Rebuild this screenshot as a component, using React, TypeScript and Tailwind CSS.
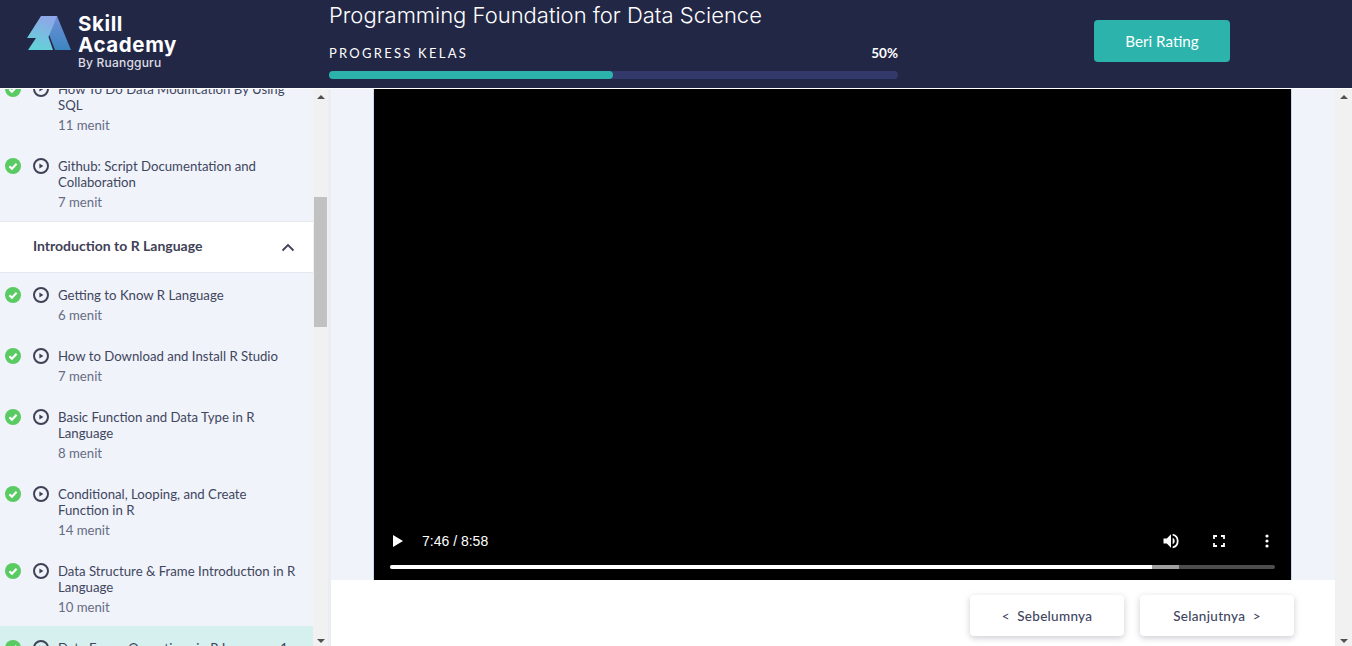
import React from 'react';

const bodyFont = "font-['Lato','Noto_Sans',sans-serif]";

interface Lesson {
  title: string;
  duration: string;
  last?: boolean;
  active?: boolean;
}

const firstLessons: Lesson[] = [
  { title: 'How To Do Data Modification By Using SQL', duration: '11 menit' },
  { title: 'Github: Script Documentation and Collaboration', duration: '7 menit', last: true }
];

const rLessons: Lesson[] = [
  { title: 'Getting to Know R Language', duration: '6 menit' },
  { title: 'How to Download and Install R Studio', duration: '7 menit' },
  { title: 'Basic Function and Data Type in R Language', duration: '8 menit' },
  { title: 'Conditional, Looping, and Create Function in R', duration: '14 menit' },
  { title: 'Data Structure & Frame Introduction in R Language', duration: '10 menit' },
  { title: 'Data Frame Operations in R Language 1', duration: '9 menit', active: true }
];

const CheckBadge = () => (
  <svg width="16" height="16" viewBox="0 0 16 16" className="shrink-0">
    <circle cx="8" cy="8" r="8" fill="#5acb62" />
    <path d="M4.4 8.300l2.500 2.400 4.700-4.900" fill="none" stroke="#fff" strokeWidth="2.200" />
  </svg>
);

const PlayCircle = () => (
  <svg width="16" height="16" viewBox="0 0 16 16" className="shrink-0">
    <circle cx="8" cy="8" r="7" fill="none" stroke="#3f4257" strokeWidth="2" />
    <path d="M6.400 5.400l4 2.600-4 2.600z" fill="#3f4257" />
  </svg>
);

const LessonRow = ({ lesson }: { lesson: Lesson }) => (
  <div className={`flex pl-[5px] ${lesson.active ? '-mt-px bg-[#d5f0ee] pt-[14px]' : 'pt-[13px]'} ${lesson.last ? 'pb-[11px]' : 'pb-[12px]'}`}>
    <CheckBadge />
    <div className="ml-[12px]">
      <PlayCircle />
    </div>
    <div className="ml-[9px] w-[240px]">
      <div className="text-[13.2px] leading-[16px] text-[#41465f]">{lesson.title}</div>
      <div className="mt-[4px] text-[13.2px] leading-[16px] text-[#666c84]">{lesson.duration}</div>
    </div>
  </div>
);

const Logo = () => (
  <div className="flex items-start pl-[27px] pt-[13px]">
    <svg width="45" height="36" viewBox="0 0 45 36" className="mt-[2px] shrink-0">
      <defs>
        <linearGradient id="bolt" x1="0.6" y1="0" x2="0.3" y2="1">
          <stop offset="0" stopColor="#8fa6e8" />
          <stop offset="1" stopColor="#62d3d8" />
        </linearGradient>
        <linearGradient id="leg" x1="0.5" y1="0" x2="0.5" y2="1">
          <stop offset="0" stopColor="#6f8fd8" />
          <stop offset="1" stopColor="#3c86c0" />
        </linearGradient>
      </defs>
      <path d="M14 1H30L44 35H28L21 17Z" fill="url(#leg)" />
      <path d="M14 1H30L21.500 22L26 35H1L9 23H0Z" fill="url(#bolt)" />
    </svg>
    <div className="ml-[6px] font-['Inter',sans-serif] text-white">
      <div className="text-[20.5px] font-bold leading-[21px] tracking-[0.6px]">Skill</div>
      <div className="text-[20.5px] font-bold leading-[21px] tracking-[0.6px]">Academy</div>
      <div className="mt-[1px] text-[12px] font-medium leading-[14px] tracking-[0.2px] text-[#dcdde3]">By Ruangguru</div>
    </div>
  </div>
);

const Header = () => (
  <header className="flex h-[88px] shrink-0 bg-[#232746]">
    <div className="w-[329px] shrink-0">
      <Logo />
    </div>
    <div className="w-[569px] shrink-0">
      <div className="font-['Inter',sans-serif] text-[22px] font-light leading-[30px] text-white">Programming Foundation for Data Science</div>
      <div className={`mt-[15px] flex items-center justify-between ${bodyFont} leading-[16px] text-white`}>
        <span className="text-[13px] tracking-[2.250px]">PROGRESS KELAS</span>
        <span className="text-[13.5px] font-bold">50%</span>
      </div>
      <div className="mt-[10px] h-[8px] rounded-full bg-[#33396a]">
        <div className="h-full w-[284px] rounded-full bg-[#2bb3ac]" />
      </div>
    </div>
    <button className={`ml-[196px] mt-[20px] h-[42px] w-[136px] rounded-[4px] bg-[#2bb3ac] ${bodyFont} text-[15.200px] text-white`}>
      Beri Rating
    </button>
  </header>
);

const Sidebar = () => (
  <aside className={`h-full w-[313px] shrink-0 overflow-hidden bg-[#f0f3f9] ${bodyFont}`}>
    <div className="-mt-[21px]">
      {firstLessons.map((lesson) => (
        <LessonRow key={lesson.title} lesson={lesson} />
      ))}
      <div className="flex h-[52px] items-center justify-between border-y border-[#e4e8f0] bg-white pl-[33px] pr-[18px]">
        <span className="pb-[3px] text-[14px] font-bold text-[#3f4257]">Introduction to R Language</span>
        <svg width="14" height="9" viewBox="0 0 14 9">
          <path d="M1.500 7.500L7 2l5.500 5.500" fill="none" stroke="#3f4257" strokeWidth="1.800" />
        </svg>
      </div>
      <div className="mt-px">
        {rLessons.map((lesson) => (
          <LessonRow key={lesson.title} lesson={lesson} />
        ))}
      </div>
    </div>
  </aside>
);

const Scrollbar = ({ thumb, width }: { thumb: boolean; width: string }) => (
  <div className={`flex h-full shrink-0 flex-col items-center justify-between bg-[#f1f1f1] ${width}`}>
    <div className="mt-[6px] h-0 w-0 border-x-[4px] border-b-[4px] border-x-transparent border-b-[#505050]" />
    {thumb && <div className="mb-[214px] h-[130px] w-[13px] bg-[#c1c1c1]" />}
    <div className="mb-[3px] h-0 w-0 border-x-[4px] border-t-[4px] border-x-transparent border-t-[#505050]" />
  </div>
);

const VideoPlayer = () => (
  <div className="flex h-[491px] w-[917px] flex-col justify-end bg-black px-[16px] font-['Liberation_Sans',sans-serif] text-white">
    <div className="flex h-[24px] items-center">
      <svg width="12" height="14" viewBox="0 0 12 14" className="ml-[2px]">
        <path d="M1 1l10 6-10 6z" fill="#fff" />
      </svg>
      <span className="ml-[18px] text-[14px]">7:46 / 8:58</span>
      <div className="ml-auto flex items-center gap-[32px]">
        <div className="flex w-[16px] justify-center">
          <svg width="20" height="20" viewBox="0 0 24 24" className="shrink-0">
            <path d="M3 9v6h4l5 5V4L7 9H3zm13.500 3A4.500 4.500 0 0 0 14 8v8a4.500 4.500 0 0 0 2.500-4z" fill="#fff" />
            <path d="M14 3.200v2.100a7 7 0 0 1 0 13.400v2.100a9 9 0 0 0 0-17.600z" fill="#fff" />
          </svg>
        </div>
        <div className="flex w-[16px] justify-center">
          <svg width="12" height="12" viewBox="0 0 12 12" className="shrink-0">
            <path d="M1 4V1h3M8 1h3v3M11 8v3H8M4 11H1V8" fill="none" stroke="#fff" strokeWidth="1.800" />
          </svg>
        </div>
        <div className="flex w-[16px] justify-center">
          <svg width="4" height="14" viewBox="0 0 4 14" className="shrink-0">
            <circle cx="2" cy="2" r="1.600" fill="#fff" />
            <circle cx="2" cy="7" r="1.600" fill="#fff" />
            <circle cx="2" cy="12" r="1.600" fill="#fff" />
          </svg>
        </div>
      </div>
    </div>
    <div className="mb-[11px] mt-[12px] flex h-[4px] overflow-hidden rounded-full bg-[#4d4d4d]">
      <div className="w-[762px] bg-white" />
      <div className="w-[27px] bg-[#a0a0a0]" />
    </div>
  </div>
);

const NavButton = ({ children }: { children: React.ReactNode }) => (
  <button className={`flex h-[41px] w-[154px] items-center justify-center rounded-[4px] bg-white pt-[1px] ${bodyFont} text-[13.500px] font-medium tracking-[0.3px] text-[#41465f] shadow-[0_2px_6px_rgba(50,55,80,0.25)]`}>
    {children}
  </button>
);

export default function App() {
  return (
    <div className="flex h-[646px] w-[1352px] flex-col overflow-hidden bg-white">
      <Header />
      <div className="flex h-[558px] border-t border-white">
        <Sidebar />
        <Scrollbar width="w-[15px]" thumb />
        <div className="w-[3px] shrink-0 bg-[#eaedf3]" />
        <main className="flex w-[1004px] shrink-0 flex-col">
          <div className="flex justify-center bg-[#f0f3f9] pr-[1px]">
            <div className="border-x border-[#c8d6f0]">
              <VideoPlayer />
            </div>
          </div>
          <div className="flex justify-end gap-[16px] pr-[41px] pt-[15px]">
            <NavButton>&lt;&nbsp; Sebelumnya</NavButton>
            <NavButton>Selanjutnya &nbsp;&gt;</NavButton>
          </div>
        </main>
        <Scrollbar width="w-[17px]" thumb={false} />
      </div>
    </div>
  );
}
